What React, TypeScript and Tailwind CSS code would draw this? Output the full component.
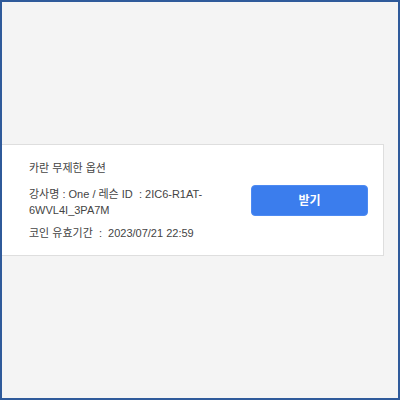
export default function App() {
  return (
    <div
      className="w-[400px] h-[400px] border-2 border-[#2f5a9a] bg-[#f4f4f4] pt-[142px] pr-[14px]"
      style={{ fontFamily: '"Liberation Sans", "Noto Sans CJK KR", sans-serif' }}
    >
      {/* Option card */}
      <div className="flex items-center bg-white border-y border-r border-[#dedede] pl-[27px] pr-[15px] pt-[15px] pb-[14px]">
        <div className="w-[176px] text-[11px] leading-[16px] text-[#444] whitespace-pre-wrap break-words">
          <p>카란 무제한 옵션</p>
          <p className="mt-[10px]">강사명 : One / 레슨 ID  : 2IC6-R1AT-6WVL4I_3PA7M</p>
          <p className="mt-[7px]">코인 유효기간  :  2023/07/21 22:59</p>
        </div>
        <button className="ml-auto w-[117px] h-[31px] rounded-[4px] border border-[#4d8af2] bg-[#3b7ded] text-white text-[12px] font-bold">
          받기
        </button>
      </div>
    </div>
  );
}
